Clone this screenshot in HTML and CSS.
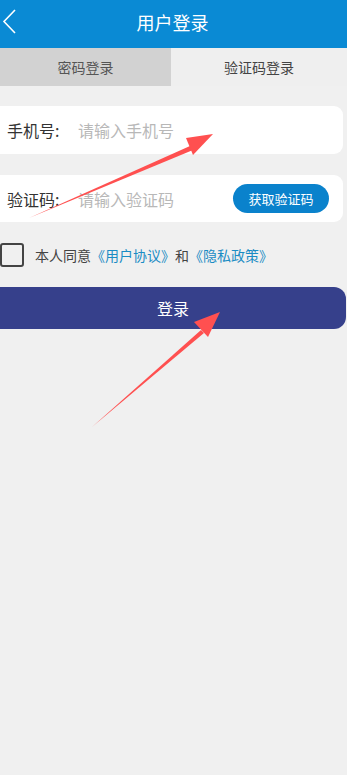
FILE: index.html
```html
<!DOCTYPE html>
<html lang="zh-CN">
<head>
    <meta charset="UTF-8">
    <meta name="viewport" content="width=device-width, initial-scale=1.0">
    <title>用户登录</title>
    <link rel="stylesheet" href="styles.css">
</head>
<body>
    <div class="page">
        <header class="top-bar">
            <svg class="back-icon" width="20" height="30" viewBox="0 0 20 30">
                <polyline points="14,3 3,14.5 14,26" fill="none" stroke="#fff" stroke-width="1.6" stroke-linejoin="miter"/>
            </svg>
            <h1 class="title">用户登录</h1>
        </header>

        <div class="tabs">
            <div class="tab tab-off">密码登录</div>
            <div class="tab">验证码登录</div>
        </div>

        <div class="form">
            <div class="field">
                <span class="field-label">手机号:</span>
                <span class="field-input">请输入手机号</span>
            </div>
            <div class="field field-code">
                <span class="field-label">验证码:</span>
                <span class="field-input">请输入验证码</span>
                <button class="code-btn">获取验证码</button>
            </div>

            <div class="agree">
                <span class="checkbox"></span>
                <span class="agree-text">本人同意<a class="link">《用户协议》</a>和<a class="link">《隐私政策》</a></span>
            </div>

            <button class="login-btn">登录</button>
        </div>

        <!-- annotation arrows -->
        <svg class="arrows" width="347" height="775" viewBox="0 0 347 775">
            <polygon fill="#ff5050" points="29,218 190,146 193,150"/>
            <polygon fill="#ff5050" points="213,134 186,138 193,155"/>
            <polygon fill="#ff5050" points="92,427 201,330 204,333"/>
            <polygon fill="#ff5050" points="220,312 194,322 208,337"/>
        </svg>
    </div>
</body>
</html>
```

FILE: styles.css
```css
body {
    margin: 0;
    background: #f0f0f0;
    font-family: "Noto Sans CJK SC", "Noto Sans", sans-serif;
}

.page {
    position: relative;
    width: 347px;
    min-height: 775px;
}

.top-bar {
    height: 48px;
    background: #0a8ad4;
    display: flex;
    align-items: center;
    justify-content: center;
    position: relative;
}

.back-icon {
    position: absolute;
    left: 1px;
    top: 7px;
}

.title {
    margin: 0 0 5px -2px;
    color: #fff;
    font-size: 18px;
    font-weight: 400;
    line-height: 24px;
}

.tabs {
    display: flex;
    height: 38px;
}

.tab {
    flex: 1;
    display: flex;
    align-items: center;
    justify-content: center;
    font-size: 14px;
    color: #444;
    background: #efefef;
}

.tab-off {
    flex: 0 0 171px;
    background: #d2d2d2;
    color: #555;
}

.form {
    padding-top: 20px;
}

.field {
    width: 343px;
    height: 48px;
    background: #fff;
    border-radius: 0 9px 9px 0;
    display: flex;
    align-items: center;
    margin-bottom: 21px;
}

.field-code {
    height: 47px;
}

.field-label {
    width: 71px;
    padding-left: 7px;
    font-size: 16px;
    color: #333;
}

.field-input {
    flex: 1;
    font-size: 16px;
    color: #b8b8b8;
}

.code-btn {
    margin-right: 14px;
    width: 96px;
    height: 29px;
    border: none;
    border-radius: 15px;
    background: #0a82cc;
    color: #fff;
    font-family: inherit;
    font-size: 13px;
    padding: 0;
}

.agree {
    display: flex;
    align-items: center;
    height: 24px;
    margin-bottom: 20px;
}

.checkbox {
    width: 20px;
    height: 20px;
    border: 2px solid #444;
    border-radius: 3px;
}

.agree-text {
    margin-left: 11px;
    font-size: 14px;
    color: #444;
}

.link {
    color: #1a8cc4;
}

.login-btn {
    display: block;
    width: 346px;
    height: 42px;
    border: none;
    border-radius: 0 12px 12px 0;
    background: #36408b;
    color: #fff;
    font-family: inherit;
    font-size: 16px;
    padding: 0;
}

.arrows {
    position: absolute;
    left: 0;
    top: 0;
    pointer-events: none;
}
```
